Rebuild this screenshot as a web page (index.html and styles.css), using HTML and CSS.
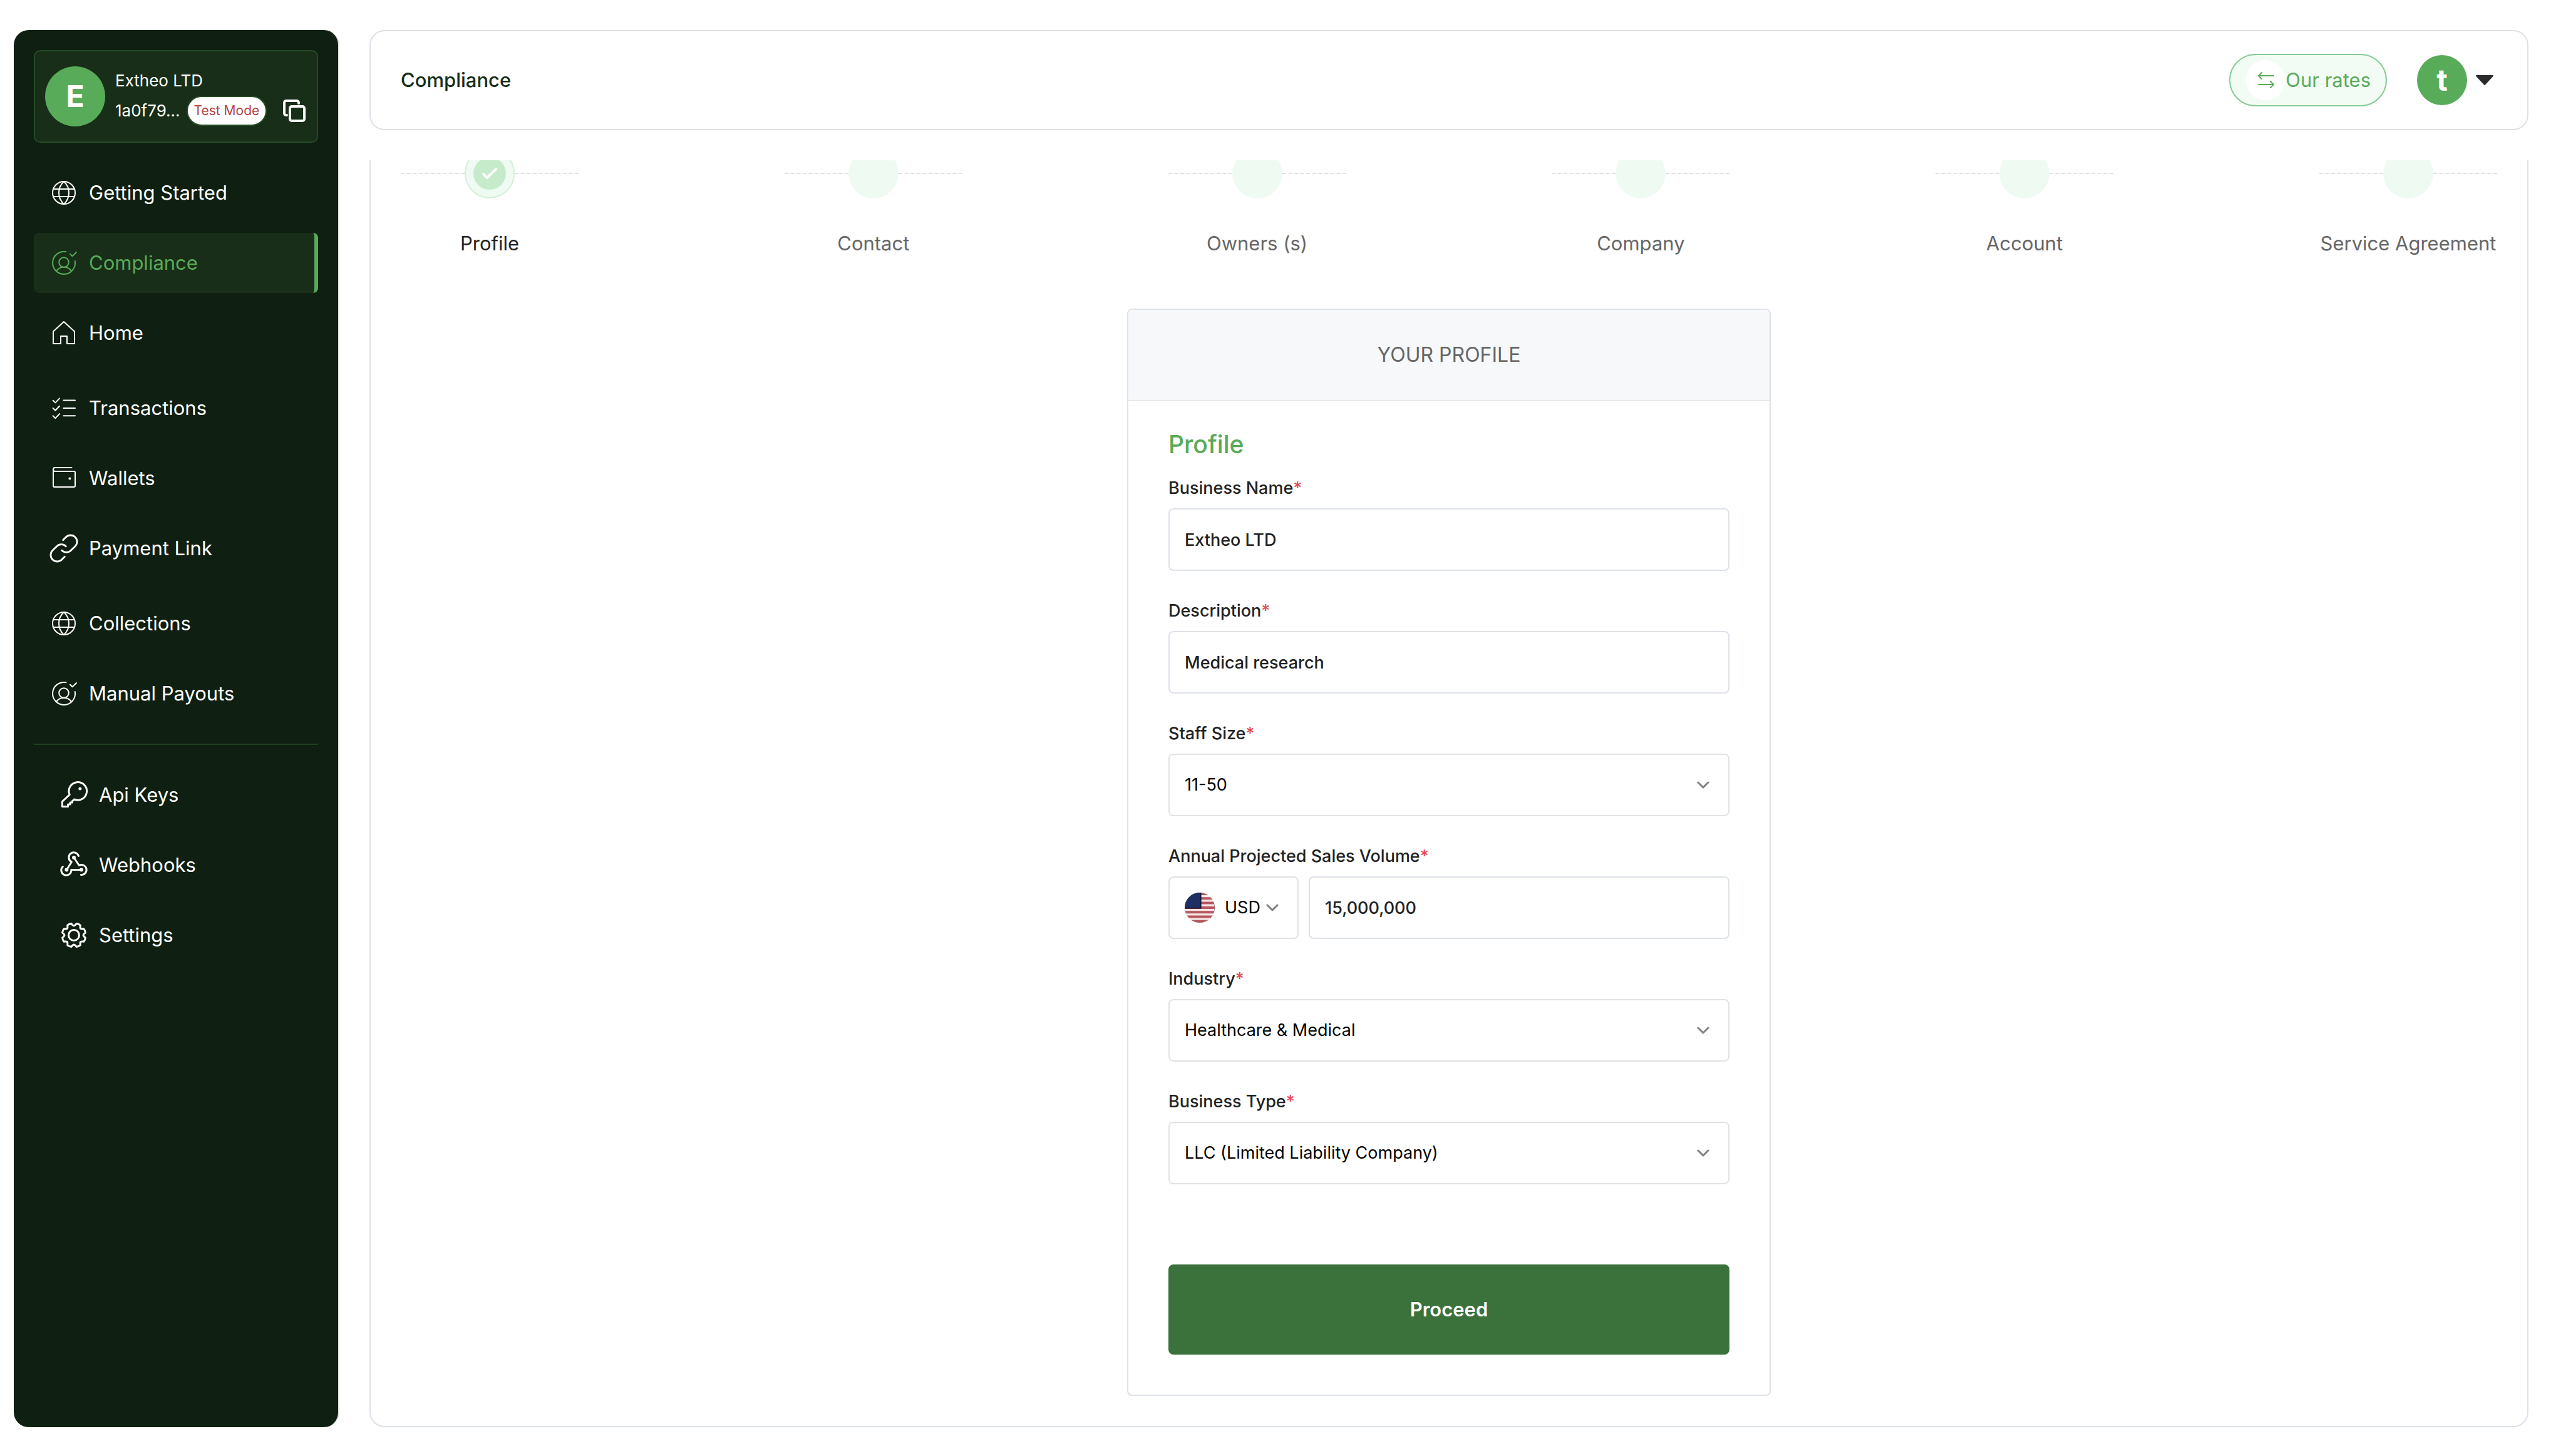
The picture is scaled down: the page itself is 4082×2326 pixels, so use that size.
FILE: index.html
```html
<!DOCTYPE html>
<html lang="en">
<head>
  <meta charset="UTF-8">
  <meta name="viewport" content="width=device-width, initial-scale=1.0">
  <title>Compliance</title>
  <link rel="stylesheet" href="styles.css">
</head>
<body>
  <!-- Shared icons -->
  <svg class="sprite" aria-hidden="true">
    <symbol id="icon-globe" viewBox="0 0 40 40">
      <circle cx="20" cy="20" r="18"/>
      <path d="M20 2C15 6.500 12 12.500 12 20s3 13.500 8 18c5-4.500 8-10.500 8-18S25 6.500 20 2zM3 14h34M3 26h34"/>
    </symbol>
    <symbol id="icon-user-check" viewBox="0 0 40 40" overflow="visible">
      <path d="M23.500 2.300A18 18 0 1 0 37.800 17"/>
      <circle cx="20" cy="19" r="7.800"/>
      <path d="M8 33.200C10.500 29.300 15 26.800 20 26.800s9.500 2.500 12 6.400M30 5.700l3.500 3.500L40 3"/>
    </symbol>
    <symbol id="icon-chevron" viewBox="0 0 20 20">
      <path d="M2 6l8 8 8-8"/>
    </symbol>
  </svg>

  <div class="layout">
    <aside class="sidebar">
      <div class="account">
        <span class="avatar avatar-lg">E</span>
        <div class="account-info">
          <p>Extheo LTD</p>
          <div class="account-row">
            <span>1a0f79...</span>
            <span class="badge">Test Mode</span>
            <button type="button" class="copy" aria-label="Copy ID">
              <svg viewBox="0 0 36 36"><rect x="11" y="11" width="23" height="23" rx="3"/><path d="M25 6V5a3 3 0 0 0-3-3H5a3 3 0 0 0-3 3v17a3 3 0 0 0 3 3h1"/></svg>
            </button>
          </div>
        </div>
      </div>

      <nav class="nav">
        <div class="nav-group">
          <a href="#" class="nav-item"><svg class="icon"><use href="#icon-globe"/></svg>Getting Started</a>
          <a href="#" class="nav-item active"><svg class="icon"><use href="#icon-user-check"/></svg>Compliance</a>
          <a href="#" class="nav-item"><svg class="icon" viewBox="0 0 40 40"><path d="M3 37V17.500L20 2l17 15.500V37H25V25H15v12z"/></svg>Home</a>
        </div>
        <div class="nav-group">
          <a href="#" class="nav-item"><svg class="icon" viewBox="0 0 40 40"><path d="M19.500 7.600H38M19.500 20H38M19.500 32.300H38M2.600 7.600l3.800 3.800L13 4.400M2.600 20l3.800 3.800L13 16.800M2.600 32.300l3.800 3.800L13 29.100"/></svg>Transactions</a>
          <a href="#" class="nav-item"><svg class="icon" viewBox="0 0 40 40"><path d="M32.500 3H6a3 3 0 0 0-3 3v26a2 2 0 0 0 2 2h31a2 2 0 0 0 2-2V11a2 2 0 0 0-2-2H6a3 3 0 0 1-3-3"/><circle class="dot" cx="29.400" cy="20.600" r="1"/></svg>Wallets</a>
          <a href="#" class="nav-item"><svg class="icon icon-link" viewBox="43 43 170 170"><path d="M122.300 71.400l19.800-19.800a44.100 44.100 0 0 1 62.400 62.400l-28.300 28.200a43.900 43.900 0 0 1-62.200 0"/><path d="M133.700 184.600l-19.800 19.800a44.100 44.100 0 0 1-62.400-62.400l28.300-28.200a43.900 43.900 0 0 1 62.200 0"/></svg>Payment Link</a>
        </div>
        <div class="nav-group">
          <a href="#" class="nav-item"><svg class="icon"><use href="#icon-globe"/></svg>Collections</a>
          <a href="#" class="nav-item"><svg class="icon"><use href="#icon-user-check"/></svg>Manual Payouts</a>
        </div>
      </nav>

      <nav class="nav-group nav-dev">
        <a href="#" class="nav-item"><svg class="icon" viewBox="0 0 40 40"><path d="M13.200 19.500A14.300 14.300 0 1 1 20.800 27l-3.300 2.700v2.200h-3.500v3.200h-3.500v3.400H1.500v-8.200z"/><circle class="dot" cx="29.800" cy="10" r="1"/></svg>Api Keys</a>
        <a href="#" class="nav-item"><svg class="icon" viewBox="0 0 40 40"><path d="M27.500 5.500A8 8 0 1 0 16.300 15L8.400 27.500M2.300 22.500A8 8 0 1 0 15.800 27.500H32M20 8l8.300 12.500A8 8 0 1 1 31.500 35.500"/><circle class="dot" cx="20" cy="8" r="1.500"/><circle class="dot" cx="8.400" cy="27.500" r="1.500"/><circle class="dot" cx="32" cy="27.500" r="1.500"/></svg>Webhooks</a>
        <a href="#" class="nav-item"><svg class="icon" viewBox="0 0 40 40"><circle cx="20" cy="20" r="8.500"/><path d="M20 5Q22 4.600 24 1.600Q27.500 1.800 30.300 4.200Q29.700 7.800 30.600 9.400Q32.200 10.300 35.800 9.700Q38.200 12.500 38.400 16Q35.400 18 35 20Q35.400 22 38.400 24Q38.200 27.500 35.800 30.300Q32.200 29.700 30.600 30.600Q29.700 32.200 30.300 35.800Q27.500 38.200 24 38.400Q22 35.400 20 35Q18 35.400 16 38.400Q12.500 38.200 9.700 35.800Q10.300 32.200 9.400 30.600Q7.800 29.700 4.200 30.300Q1.800 27.500 1.600 24Q4.600 22 5 20Q4.600 18 1.600 16Q1.800 12.500 4.200 9.700Q7.800 10.300 9.400 9.400Q10.300 7.800 9.700 4.200Q12.500 1.800 16 1.600Q18 4.600 20 5z"/></svg>Settings</a>
      </nav>
    </aside>

    <div class="content">
      <header class="topbar">
        <h1>Compliance</h1>
        <div class="topbar-actions">
          <button type="button" class="rates">
            <span class="rates-icon">
              <svg viewBox="0 0 32 32"><path d="M10 4L5 9l5 5M5 9h24M24 18l5 5-5 5M29 23H5"/></svg>
            </span>
            Our rates
          </button>
          <button type="button" class="user-menu" aria-label="Account menu">
            <span class="avatar">t</span>
            <svg viewBox="0 0 44 44"><path d="M9 15h26L22 29z"/></svg>
          </button>
        </div>
      </header>

      <main class="panel">
        <ol class="steps">
          <li class="step current">
            <div class="step-line"><span class="step-dot"><span class="step-check"><svg viewBox="0 0 28 28"><path d="M4 15l6 6L24 7"/></svg></span></span></div>
            <span>Profile</span>
          </li>
          <li class="step"><div class="step-line"><span class="step-dot"></span></div><span>Contact</span></li>
          <li class="step"><div class="step-line"><span class="step-dot"></span></div><span>Owners (s)</span></li>
          <li class="step"><div class="step-line"><span class="step-dot"></span></div><span>Company</span></li>
          <li class="step"><div class="step-line"><span class="step-dot"></span></div><span>Account</span></li>
          <li class="step"><div class="step-line"><span class="step-dot"></span></div><span>Service Agreement</span></li>
        </ol>

        <form class="card">
          <h2 class="card-header">YOUR PROFILE</h2>
          <div class="card-body">
            <h3>Profile</h3>

            <div class="fields">
              <div class="field">
                <label for="business-name">Business Name<span class="required">*</span></label>
                <input type="text" id="business-name" class="control" value="Extheo LTD">
              </div>

              <div class="field">
                <label for="description">Description<span class="required">*</span></label>
                <input type="text" id="description" class="control" value="Medical research">
              </div>

              <div class="field">
                <label for="staff-size">Staff Size<span class="required">*</span></label>
                <div class="control select">
                  <select id="staff-size"><option>11-50</option></select>
                  <svg class="chevron"><use href="#icon-chevron"/></svg>
                </div>
              </div>

              <div class="field">
                <label for="sales-volume">Annual Projected Sales Volume<span class="required">*</span></label>
                <div class="money">
                  <div class="control select currency">
                    <svg class="flag" viewBox="0 0 48 48">
                      <clipPath id="flag-clip"><circle cx="24" cy="24" r="24"/></clipPath>
                      <g clip-path="url(#flag-clip)">
                        <rect width="48" height="48" fill="#f6e6e6"/>
                        <path class="stripes" d="M0 2h48M0 9.300h48M0 16.600h48M0 23.900h48M0 31.200h48M0 38.500h48M0 45.800h48"/>
                        <rect width="26" height="25" fill="#1f2f63"/>
                      </g>
                    </svg>
                    <select aria-label="Currency"><option>USD</option></select>
                    <svg class="chevron"><use href="#icon-chevron"/></svg>
                  </div>
                  <input type="text" id="sales-volume" class="control" value="15,000,000">
                </div>
              </div>

              <div class="field">
                <label for="industry">Industry<span class="required">*</span></label>
                <div class="control select">
                  <select id="industry"><option>Healthcare &amp; Medical</option></select>
                  <svg class="chevron"><use href="#icon-chevron"/></svg>
                </div>
              </div>

              <div class="field">
                <label for="business-type">Business Type<span class="required">*</span></label>
                <div class="control select">
                  <select id="business-type"><option>LLC (Limited Liability Company)</option></select>
                  <svg class="chevron"><use href="#icon-chevron"/></svg>
                </div>
              </div>
            </div>

            <button type="submit" class="proceed">Proceed</button>
          </div>
        </form>
      </main>
    </div>
  </div>
</body>
</html>
```

FILE: styles.css
```css
* {
  box-sizing: border-box;
  margin: 0;
  padding: 0;
}
body {
  font-family: Inter, "Liberation Sans", sans-serif;
  font-size: 31px;
  line-height: 40px;
  color: #222;
  background: #fff;
}
button, input, select {
  font: inherit;
  color: inherit;
  border: none;
  background: none;
}
svg {
  display: block;
  flex: none;
  fill: none;
  stroke: currentColor;
  stroke-linecap: round;
  stroke-linejoin: round;
}
.sprite {
  position: absolute;
  width: 0;
  height: 0;
}
.layout {
  display: flex;
  gap: 48px;
  min-height: 100vh;
  padding: 48px 44px 46px 22px;
}

/* Sidebar */
.sidebar {
  flex: none;
  width: 520px;
  padding: 32px;
  color: #fff;
  background: #0f1f11;
  border-right: 2px solid #dfe1e0;
  border-radius: 24px;
}
.account {
  display: flex;
  align-items: center;
  gap: 16px;
  height: 148px;
  padding: 0 18px 0 16px;
  font-size: 26px;
  background: #182e18;
  border: 2px solid #254d27;
  border-radius: 10px;
}
.account-info {
  flex: 1;
  padding-top: 6px;
}
.account-row {
  display: flex;
  align-items: center;
  gap: 10px;
  height: 56px;
}
.avatar {
  display: flex;
  flex: none;
  align-items: center;
  justify-content: center;
  width: 80px;
  height: 80px;
  font-size: 48px;
  font-weight: 700;
  color: #fff;
  background: #58ab59;
  border-radius: 50%;
}
.avatar-lg {
  width: 96px;
  height: 96px;
}
.badge {
  padding: 2px 10px;
  font-size: 21px;
  color: #b94040;
  white-space: nowrap;
  background: #fff;
  border: 2px solid #254d27;
  border-radius: 24px;
}
.copy {
  margin-left: auto;
}
.copy svg {
  width: 36px;
  height: 36px;
  stroke-width: 4;
}
.nav {
  display: flex;
  flex-direction: column;
  gap: 24px;
  padding: 32px 0;
  border-bottom: 2px solid #1f4222;
}
.nav-group {
  display: flex;
  flex-direction: column;
  gap: 16px;
}
.nav-dev {
  padding-top: 32px;
}
.nav-item {
  display: flex;
  align-items: center;
  gap: 20px;
  height: 96px;
  padding-left: 28px;
  color: #fff;
  text-decoration: none;
  border-radius: 8px;
}
.nav-dev .nav-item {
  padding-left: 44px;
}
.nav-item.active {
  color: #58ab59;
  background: #182e18;
  border-right: 6px solid #58ab59;
}
.icon {
  width: 40px;
  height: 40px;
  overflow: visible;
  stroke-width: 2;
}
.icon-link {
  stroke-width: 12;
}
.nav-dev .icon {
  stroke-width: 3;
}
.dot {
  fill: currentColor;
}

/* Top bar */
.content {
  display: flex;
  flex: 1;
  flex-direction: column;
  gap: 48px;
  min-width: 0;
}
.topbar {
  display: flex;
  align-items: center;
  justify-content: space-between;
  height: 160px;
  padding: 0 46px 0 48px;
  border: 2px solid #dde1e8;
  border-radius: 24px;
}
.topbar h1 {
  font-size: 31px;
  font-weight: 500;
  color: #182e18;
}
.topbar-actions {
  display: flex;
  align-items: center;
  gap: 48px;
}
.rates {
  display: flex;
  align-items: center;
  height: 84px;
  padding: 0 24px;
  color: #58ab59;
  background: #f3fbf5;
  border: 2px solid #84cc95;
  border-radius: 42px;
}
.rates-icon {
  display: grid;
  place-items: center;
  width: 64px;
  height: 64px;
  background: #fff;
  border-radius: 50%;
}
.rates-icon svg {
  width: 32px;
  height: 32px;
  stroke-width: 2;
}
.user-menu {
  display: flex;
  align-items: center;
  gap: 6px;
}
.user-menu svg {
  width: 44px;
  height: 44px;
  color: #2b2b2b;
  fill: currentColor;
  stroke-width: 2;
}

/* Steps, scrolled slightly under the top bar */
.panel {
  flex: 1;
  padding: 0 48px 48px;
  overflow: hidden;
  border: 2px solid #dde1e8;
  border-top: none;
  border-radius: 0 0 24px 24px;
}
.steps {
  display: flex;
  justify-content: space-between;
  margin-top: -19px;
  margin-bottom: 84px;
  list-style: none;
}
.step {
  display: flex;
  flex-direction: column;
  gap: 52px;
  width: 284px;
  color: #666;
  text-align: center;
  white-space: nowrap;
}
.step.current {
  color: #222;
}
.step-line {
  display: flex;
  align-items: center;
}
.step-line::before, .step-line::after {
  flex: 1;
  content: "";
  border-top: 2px dashed #dde1e8;
}
.step-dot {
  display: grid;
  place-items: center;
  width: 80px;
  height: 80px;
  background: #effbf2;
  border-radius: 50%;
}
.current .step-dot {
  border: 2px solid #d2f0d6;
}
.step-check {
  display: grid;
  place-items: center;
  width: 52px;
  height: 52px;
  color: #fff;
  background: #c6ebcb;
  border-radius: 50%;
}
.step-check svg {
  width: 28px;
  height: 28px;
  stroke-width: 4;
}

/* Profile form */
.card {
  width: 1028px;
  max-width: 100%;
  margin: 0 auto;
  overflow: hidden;
  border: 2px solid #dde1e8;
  border-radius: 8px;
}
.card-header {
  padding: 52px 0;
  font-size: 32px;
  font-weight: 400;
  color: #666;
  text-align: center;
  background: #f7f8fa;
  border-bottom: 1px solid #dde1e8;
}
.card-body {
  padding: 44px 64px 64px;
}
.card-body h3 {
  margin-bottom: 26px;
  font-size: 39px;
  font-weight: 500;
  line-height: 52px;
  color: #58ab59;
}
.fields {
  display: flex;
  flex-direction: column;
  gap: 46px;
}
.field {
  display: flex;
  flex-direction: column;
  gap: 14px;
  font-size: 27px;
  line-height: 36px;
}
.field label {
  font-weight: 500;
}
.required {
  color: #e5484d;
}
.control {
  width: 100%;
  height: 100px;
  padding: 0 24px;
  border: 2px solid #dde1e8;
  border-radius: 8px;
}
input.control {
  font-weight: 500;
}
.select {
  display: flex;
  align-items: center;
  padding-right: 30px;
  color: #000;
  border-color: #e1e2e5;
}
.select select {
  flex: 1;
  height: 100%;
  appearance: none;
}
.chevron {
  width: 20px;
  height: 20px;
  color: #808080;
  stroke-width: 3;
}
.money {
  display: flex;
  gap: 16px;
}
.currency {
  flex: none;
  width: 208px;
}
.flag {
  width: 48px;
  height: 48px;
  margin-right: 16px;
}
.stripes {
  stroke: #b5585f;
  stroke-width: 4;
}
.proceed {
  width: 100%;
  height: 144px;
  margin-top: 128px;
  font-weight: 600;
  color: #fff;
  background: #3b723b;
  border-radius: 8px;
}
```
